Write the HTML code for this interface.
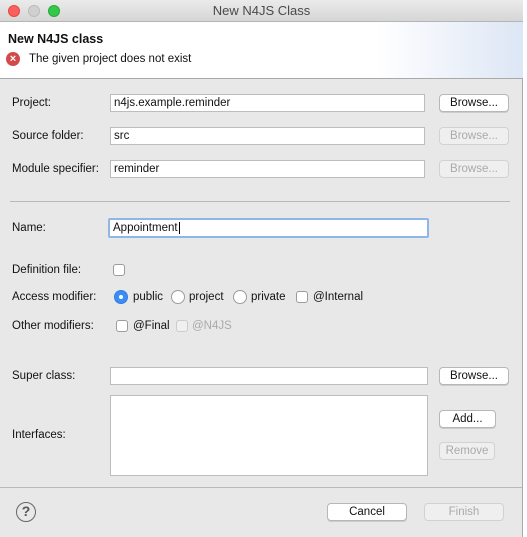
<!DOCTYPE html>
<html><head><style>
*{box-sizing:border-box;margin:0;padding:0}
body{width:527px;height:537px;background:#fff;font-family:"Liberation Sans",sans-serif;font-size:11.5px;color:#111;position:relative;overflow:hidden}
.win{position:absolute;left:0;top:0;width:523px;height:537px;background:#e8e8e8;border-right:1px solid #aaa}
.title{position:absolute;left:0;top:0;width:523px;height:22px;background:linear-gradient(#ebebeb,#d6d6d6);border-bottom:1px solid #b5b5b5;text-align:center;line-height:22px;font-size:13px;color:#4a4a4a}
.dot{position:absolute;top:5px;width:12px;height:12px;border-radius:50%}
.hdr{position:absolute;left:0;top:22px;width:523px;height:57px;background:linear-gradient(90deg,#fff 72%,#dde6f5);border-bottom:1px solid #a9a9a9}
.a{position:absolute}
.f{position:absolute;background:#fff;border:1px solid #bdbdbd;height:18px;padding-left:3px;line-height:17px;font-size:11.5px}
.b{position:absolute;background:#fff;border:1px solid #b7b7b7;border-radius:4px;height:18px;text-align:center;line-height:16px;font-size:11.5px;box-shadow:0 1px 0 #ccc}
.d{background:#efefef;color:#aaa;border-color:#d2d2d2;box-shadow:none}
.cb{position:absolute;width:12px;height:12px;background:#fff;border:1px solid #9c9c9c;border-radius:3px}
.rd{position:absolute;width:14px;height:14px;background:#fff;border:1px solid #9c9c9c;border-radius:50%}
</style></head><body>
<div class="win">
<div class="title">New N4JS Class
<div class="dot" style="left:8px;background:#fc605c;border:1px solid #de4a45"></div>
<div class="dot" style="left:28px;background:#d0d0d0;border:1px solid #bbb"></div>
<div class="dot" style="left:48px;background:#34c84a;border:1px solid #27a93a"></div>
</div>
<div class="hdr">
<div class="a" style="left:8px;top:10px;font-weight:bold;font-size:12.5px">New N4JS class</div>
<div class="a" style="left:6px;top:30px;width:14px;height:14px;border-radius:50%;background:#d24a4a;color:#fff;font-size:11px;line-height:14px;text-align:center;font-weight:bold">×</div>
<div class="a" style="left:29px;top:31px">The given project does not exist</div>
</div>

<div class="a" style="left:12px;top:97px">Project:</div>
<div class="f" style="left:110px;top:94px;width:315px">n4js.example.reminder</div>
<div class="b" style="left:439px;top:94px;width:70px">Browse...</div>

<div class="a" style="left:12px;top:130px">Source folder:</div>
<div class="f" style="left:110px;top:127px;width:315px">src</div>
<div class="b d" style="left:439px;top:127px;width:70px">Browse...</div>

<div class="a" style="left:12px;top:163px">Module specifier:</div>
<div class="f" style="left:110px;top:160px;width:315px">reminder</div>
<div class="b d" style="left:439px;top:160px;width:70px">Browse...</div>

<div class="a" style="left:10px;top:201px;width:500px;height:1px;background:#b9b9b9"></div>

<div class="a" style="left:12px;top:222px">Name:</div>
<div class="f" style="left:108px;top:218px;width:321px;height:20px;border:2px solid #8fb5ea;border-radius:2px;line-height:16px">Appointment<span style="border-left:1px solid #000;margin-left:1px"></span></div>

<div class="a" style="left:12px;top:264px">Definition file:</div>
<div class="cb" style="left:113px;top:264px"></div>

<div class="a" style="left:12px;top:291px">Access modifier:</div>
<div class="rd" style="left:114px;top:290px;background:#3b8df5;border-color:#2f7de0"><div style="position:absolute;left:4px;top:4px;width:4px;height:4px;border-radius:50%;background:#fff"></div></div>
<div class="a" style="left:133px;top:291px">public</div>
<div class="rd" style="left:171px;top:290px"></div>
<div class="a" style="left:189px;top:291px">project</div>
<div class="rd" style="left:233px;top:290px"></div>
<div class="a" style="left:251px;top:291px">private</div>
<div class="cb" style="left:296px;top:291px"></div>
<div class="a" style="left:313px;top:291px">@Internal</div>

<div class="a" style="left:12px;top:320px">Other modifiers:</div>
<div class="cb" style="left:116px;top:320px"></div>
<div class="a" style="left:133px;top:320px">@Final</div>
<div class="cb" style="left:176px;top:320px;background:#f0f0f0;border-color:#ccc"></div>
<div class="a" style="left:192px;top:320px;color:#aaa">@N4JS</div>

<div class="a" style="left:12px;top:370px">Super class:</div>
<div class="f" style="left:110px;top:367px;width:318px"></div>
<div class="b" style="left:439px;top:367px;width:70px">Browse...</div>

<div class="a" style="left:12px;top:429px">Interfaces:</div>
<div class="f" style="left:110px;top:395px;width:318px;height:81px"></div>
<div class="b" style="left:439px;top:410px;width:57px">Add...</div>
<div class="b d" style="left:439px;top:442px;width:56px">Remove</div>

<div class="a" style="left:0;top:487px;width:522px;height:1px;background:#b9b9b9"></div>
<div class="a" style="left:16px;top:502px;width:20px;height:20px;border-radius:50%;border:1.5px solid #666;text-align:center;line-height:17px;font-size:14px;font-weight:bold;color:#555">?</div>
<div class="b" style="left:327px;top:503px;width:80px">Cancel</div>
<div class="b d" style="left:424px;top:503px;width:80px">Finish</div>
</div>
</body></html>
